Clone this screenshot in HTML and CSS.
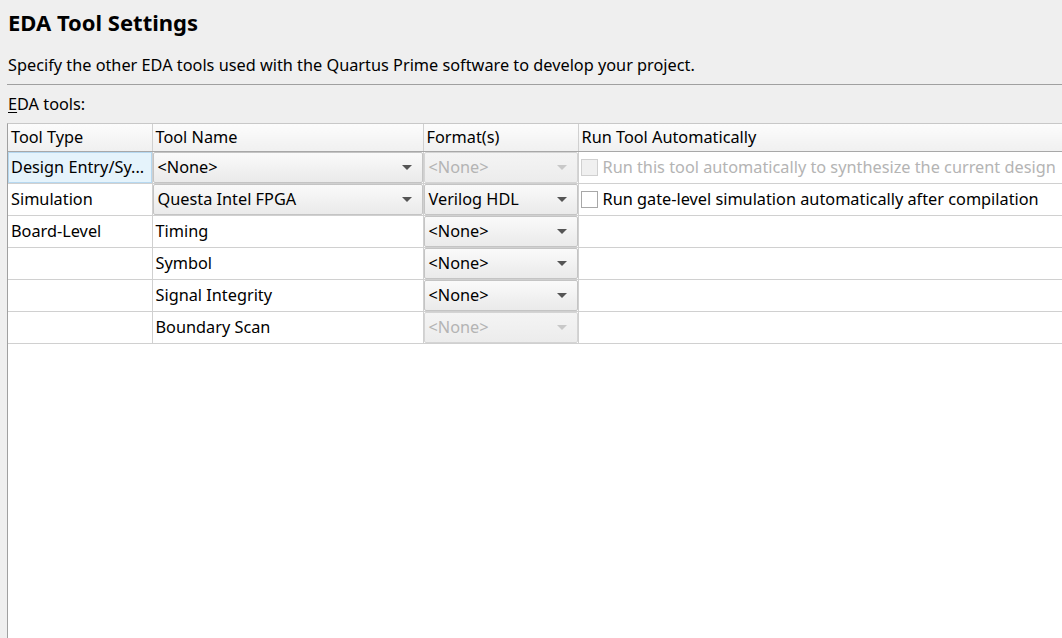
FILE: index.html
```html
<!DOCTYPE html>
<html>
<head>
<meta charset="utf-8">
<link rel="stylesheet" href="styles.css">
</head>
<body>
<div class="page">
  <h1 class="title">EDA Tool Settings</h1>
  <p class="desc">Specify the other EDA tools used with the Quartus Prime software to develop your project.</p>
  <div class="rule"></div>
  <div class="label"><span class="ul">E</span>DA tools:</div>
  <div class="view">
    <table class="grid">
      <colgroup>
        <col class="c1"><col class="c2"><col class="c3"><col class="c4">
      </colgroup>
      <thead>
        <tr><th>Tool Type</th><th>Tool Name</th><th>Format(s)</th><th>Run Tool Automatically</th></tr>
      </thead>
      <tbody>
        <tr>
          <td class="sel"><div class="selbox">Design Entry/Sy...</div></td>
          <td class="cb"><div class="combo"><span>&lt;None&gt;</span><i class="arrow"></i></div></td>
          <td class="cb"><div class="combo dis"><span>&lt;None&gt;</span><i class="arrow"></i></div></td>
          <td><div class="check dis"><span class="box"></span><span>Run this tool automatically to synthesize the current design</span></div></td>
        </tr>
        <tr>
          <td>Simulation</td>
          <td class="cb"><div class="combo"><span>Questa Intel FPGA</span><i class="arrow"></i></div></td>
          <td class="cb"><div class="combo"><span>Verilog HDL</span><i class="arrow"></i></div></td>
          <td><div class="check"><span class="box"></span><span>Run gate-level simulation automatically after compilation</span></div></td>
        </tr>
        <tr>
          <td>Board-Level</td>
          <td>Timing</td>
          <td class="cb"><div class="combo"><span>&lt;None&gt;</span><i class="arrow"></i></div></td>
          <td></td>
        </tr>
        <tr>
          <td></td>
          <td>Symbol</td>
          <td class="cb"><div class="combo"><span>&lt;None&gt;</span><i class="arrow"></i></div></td>
          <td></td>
        </tr>
        <tr>
          <td></td>
          <td>Signal Integrity</td>
          <td class="cb"><div class="combo"><span>&lt;None&gt;</span><i class="arrow"></i></div></td>
          <td></td>
        </tr>
        <tr>
          <td></td>
          <td>Boundary Scan</td>
          <td class="cb"><div class="combo dis"><span>&lt;None&gt;</span><i class="arrow"></i></div></td>
          <td></td>
        </tr>
      </tbody>
    </table>
  </div>
</div>
</body>
</html>
```

FILE: styles.css
```css
html, body {
  margin: 0;
  padding: 0;
  height: 100%;
  overflow: hidden;
}
body {
  background: #efefef;
  font-family: "Noto Sans", "Open Sans", sans-serif;
  font-size: 16.3px;
  color: #000;
}
.page {
  display: flex;
  flex-direction: column;
  height: 100%;
  padding-left: 7px;
  box-sizing: border-box;
}
.title {
  margin: 7px 0 0 1px;
  font-size: 22px;
  font-weight: bold;
  line-height: 30px;
}
.desc {
  margin: 15px 0 0 1px;
  line-height: 26px;
}
.rule {
  margin-top: 6px;
  height: 1px;
  background: #a0a0a0;
}
.label {
  margin: 7px 0 0 1px;
  line-height: 24px;
}
.ul {
  text-decoration: underline;
  text-underline-offset: 2px;
}
.view {
  margin-top: 7px;
  flex: 1;
  background: #fff;
  border-left: 1px solid #a0a0a0;
  border-top: 1px solid #c8c8c8;
  overflow: hidden;
}
.grid {
  border-collapse: collapse;
  table-layout: fixed;
  width: 1060px;
}
.c1 { width: 144px; }
.c2 { width: 271px; }
.c3 { width: 155px; }
.c4 { width: 490px; }
.grid th {
  height: 27px;
  padding: 0 0 0 3px;
  text-align: left;
  font-weight: normal;
  background: linear-gradient(#fcfcfc, #f0f0f0);
  border-right: 1px solid #d0d0d0;
  border-bottom: 1px solid #a8a8a8;
  white-space: nowrap;
  line-height: 27px;
}
.grid td {
  height: 31px;
  padding: 0 0 0 3px;
  border-right: 1px solid #d0d0d0;
  border-bottom: 1px solid #d0d0d0;
  white-space: nowrap;
  overflow: hidden;
  line-height: 31px;
}
.grid td.cb { padding: 0; }
.grid td.sel { padding: 0; }
.selbox {
  height: 31px;
  box-sizing: border-box;
  background: #e5f3fb;
  border: 1px solid #b6d8f0;
  padding-left: 2px;
  line-height: 29px;
}
.combo {
  height: 31px;
  box-sizing: border-box;
  border: 1px solid #c4c4c4;
  border-radius: 2px;
  background: linear-gradient(#fafafa, #eaeaea);
  display: flex;
  align-items: center;
  justify-content: space-between;
  padding: 0 10px 0 4px;
  line-height: 29px;
}
.combo.dis {
  color: #b4b4b4;
  background: linear-gradient(#f4f4f4, #ececec);
  border-color: #d4d4d4;
}
.arrow {
  width: 0;
  height: 0;
  border-left: 5px solid transparent;
  border-right: 5px solid transparent;
  border-top: 5px solid #555;
}
.combo.dis .arrow { border-top-color: #c8c8c8; }
.check {
  display: flex;
  align-items: center;
  gap: 5px;
  margin-left: -1px;
}
.box {
  width: 15px;
  height: 15px;
  border: 1px solid #a8a8a8;
  background: #fff;
  flex: none;
}
.check.dis { color: #b4b4b4; }
.check.dis .box {
  background: #f0f0f0;
  border-color: #d0d0d0;
}
```
